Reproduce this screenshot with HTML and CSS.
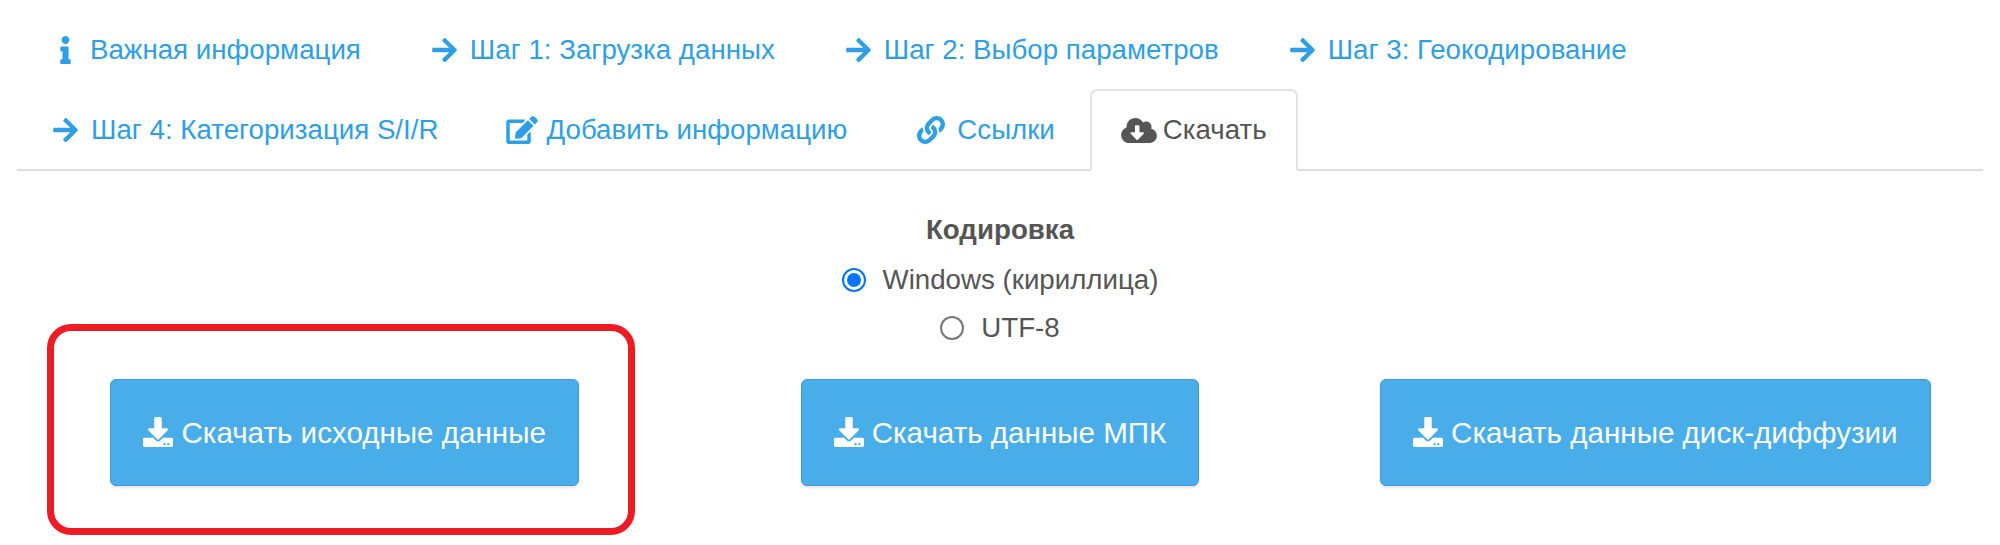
FILE: index.html
```html
<!DOCTYPE html>
<html lang="ru">
<head>
<meta charset="utf-8">
<title>Скачать</title>
<link rel="stylesheet" href="styles.css">
</head>
<body>
<svg class="defs" width="0" height="0" aria-hidden="true">
  <symbol id="i-arrow" viewBox="0 37 448 436"><path fill="currentColor" d="M190.5 66.9l22.2-22.2c9.4-9.4 24.6-9.4 33.9 0L441 239c9.4 9.4 9.4 24.6 0 33.9L246.6 467.3c-9.4 9.4-24.6 9.4-33.9 0l-22.2-22.2c-9.5-9.5-9.3-25 .4-34.3L311.4 296H24c-13.3 0-24-10.7-24-24v-32c0-13.3 10.7-24 24-24h287.4L190.9 101.2c-9.8-9.3-10-24.8-.4-34.3z"/></symbol>
  <symbol id="i-download" viewBox="0 0 512 512"><path fill="#fff" d="M216 0h80c13.3 0 24 10.7 24 24v168h87.7c17.8 0 26.7 21.5 14.1 34.1L269.7 378.3c-7.5 7.5-19.8 7.5-27.3 0L90.1 226.1c-12.6-12.6-3.7-34.1 14.1-34.1H192V24c0-13.3 10.7-24 24-24zm296 376v112c0 13.3-10.7 24-24 24H24c-13.3 0-24-10.7-24-24V376c0-13.3 10.7-24 24-24h146.7l49 49c20.1 20.1 52.5 20.1 72.6 0l49-49H488c13.3 0 24 10.7 24 24zm-124 88c0-11-9-20-20-20s-20 9-20 20 9 20 20 20 20-9 20-20zm64 0c0-11-9-20-20-20s-20 9-20 20 9 20 20 20 20-9 20-20z"/></symbol>
</svg>
<ul class="tabs">
  <li><a class="tab" href="#"><svg class="ic ic-info" viewBox="0 0 192 512"><path fill="currentColor" d="M20 424.229h20V279.771H20c-11.046 0-20-8.954-20-20V212c0-11.046 8.954-20 20-20h112c11.046 0 20 8.954 20 20v212.229h20c11.046 0 20 8.954 20 20V492c0 11.046-8.954 20-20 20H20c-11.046 0-20-8.954-20-20v-47.771c0-11.046 8.954-20 20-20zM96 0C56.235 0 24 32.235 24 72s32.235 72 72 72 72-32.235 72-72S135.764 0 96 0z"/></svg>Важная информация</a></li>
  <li><a class="tab" href="#"><svg class="ic ic-arrow"><use href="#i-arrow"/></svg>Шаг 1: Загрузка данных</a></li>
  <li><a class="tab" href="#"><svg class="ic ic-arrow"><use href="#i-arrow"/></svg>Шаг 2: Выбор параметров</a></li>
  <li><a class="tab" href="#"><svg class="ic ic-arrow"><use href="#i-arrow"/></svg>Шаг 3: Геокодирование</a></li>
  <li><a class="tab" href="#"><svg class="ic ic-arrow"><use href="#i-arrow"/></svg>Шаг 4: Категоризация S/I/R</a></li>
  <li><a class="tab" href="#"><svg class="ic ic-edit" viewBox="0 0 576 512"><path fill="currentColor" d="M402.6 83.2l90.2 90.2c3.8 3.8 3.8 10 0 13.8L274.4 405.6l-92.8 10.3c-12.4 1.4-22.9-9.1-21.5-21.5l10.3-92.8L388.8 83.2c3.8-3.8 10-3.8 13.8 0zm162-22.9l-48.8-48.8c-15.2-15.2-39.9-15.2-55.2 0l-35.4 35.4c-3.8 3.8-3.8 10 0 13.8l90.2 90.2c3.8 3.8 10 3.8 13.8 0l35.4-35.4c15.2-15.3 15.2-40 0-55.2zM384 346.2V448H64V128h229.8c3.2 0 6.2-1.3 8.5-3.5l40-40c7.6-7.6 2.2-20.5-8.5-20.5H48C21.5 64 0 85.5 0 112v352c0 26.5 21.5 48 48 48h352c26.5 0 48-21.5 48-48V306.2c0-10.7-12.9-16-20.5-8.5l-40 40c-2.2 2.3-3.5 5.3-3.5 8.5z"/></svg>Добавить информацию</a></li>
  <li><a class="tab" href="#"><svg class="ic ic-link" viewBox="0 0 512 512"><path fill="currentColor" d="M326.612 185.391c59.747 59.809 58.927 155.698.36 214.59-.11.12-.24.25-.36.37l-67.2 67.2c-59.27 59.27-155.699 59.262-214.96 0-59.27-59.26-59.27-155.7 0-214.96l37.106-37.106c9.84-9.84 26.786-3.3 27.294 10.606.648 17.722 3.826 35.527 9.69 52.721 1.986 5.822.567 12.262-3.783 16.612l-13.087 13.087c-28.026 28.026-28.905 73.66-1.155 101.96 28.024 28.579 74.086 28.749 102.325.51l67.2-67.19c28.191-28.191 28.073-73.757 0-101.83-3.701-3.694-7.429-6.564-10.341-8.569a16.037 16.037 0 0 1-6.947-12.606c-.396-10.567 3.348-21.456 11.698-29.806l21.054-21.055c5.521-5.521 14.182-6.199 20.584-1.731a152.482 152.482 0 0 1 20.522 17.197zM467.547 44.449c-59.261-59.262-155.69-59.27-214.96 0l-67.2 67.2c-.12.12-.25.25-.36.37-58.566 58.892-59.387 154.781.36 214.59a152.454 152.454 0 0 0 20.521 17.196c6.402 4.468 15.064 3.789 20.584-1.731l21.054-21.055c8.35-8.35 12.094-19.239 11.698-29.806a16.037 16.037 0 0 0-6.947-12.606c-2.912-2.005-6.64-4.875-10.341-8.569-28.073-28.073-28.191-73.639 0-101.83l67.2-67.19c28.239-28.239 74.3-28.069 102.325.51 27.75 28.3 26.872 73.934-1.155 101.96l-13.087 13.087c-4.35 4.35-5.769 10.79-3.783 16.612 5.864 17.194 9.042 34.999 9.69 52.721.509 13.906 17.454 20.446 27.294 10.606l37.106-37.106c59.271-59.259 59.271-155.699.001-214.959z"/></svg>Ссылки</a></li>
  <li><a class="tab active" href="#"><svg class="ic ic-cloud" viewBox="0 32 640 448"><path fill="currentColor" d="M537.6 226.6c4.1-10.7 6.4-22.4 6.4-34.6 0-53-43-96-96-96-19.7 0-38.1 6-53.3 16.2C367 64.2 315.3 32 256 32c-88.4 0-160 71.6-160 160 0 2.7.1 5.4.2 8.1C40.2 219.8 0 273.2 0 336c0 79.5 64.5 144 144 144h368c70.7 0 128-57.3 128-128 0-61.9-44-113.6-102.4-125.4zm-132.9 88.7L299.3 420.7c-6.2 6.2-16.4 6.2-22.6 0L171.3 315.3c-10.1-10.1-2.9-27.3 11.3-27.3H248V176c0-8.8 7.2-16 16-16h48c8.8 0 16 7.2 16 16v112h65.4c14.2 0 21.4 17.2 11.3 27.3z"/></svg>Скачать</a></li>
</ul>
<section class="encoding">
  <h2 class="encoding-title">Кодировка</h2>
  <label class="radio"><input type="radio" name="enc" checked>Windows (кириллица)</label>
  <label class="radio"><input type="radio" name="enc">UTF-8</label>
</section>
<div class="actions">
  <div class="cell">
    <a class="btn" href="#"><svg class="ic-dl"><use href="#i-download"/></svg>Скачать исходные данные</a>
    <div class="callout"></div>
  </div>
  <div class="cell"><a class="btn" href="#"><svg class="ic-dl"><use href="#i-download"/></svg>Скачать данные МПК</a></div>
  <div class="cell"><a class="btn" href="#"><svg class="ic-dl"><use href="#i-download"/></svg>Скачать данные диск-диффузии</a></div>
</div>
</body>
</html>
```
FILE: styles.css
```css
* { box-sizing: border-box; }
html, body { margin: 0; height: 100%; overflow: hidden; background: #fff; }
body {
  padding: 9px 17px 0;
  font-family: "Liberation Sans", Arial, sans-serif;
  font-size: 27.7px;
  line-height: 38px;
  color: #555;
}
.defs { position: absolute; }
.tabs {
  display: flex;
  flex-wrap: wrap;
  list-style: none;
  margin: 0;
  padding: 0;
  border-bottom: 2px solid #ddd;
}
.tabs li { margin: 0 4px -2px 0; }
.tab {
  display: flex;
  align-items: center;
  padding: 20px 29px;
  border: 2px solid transparent;
  border-radius: 7px 7px 0 0;
  color: #2e9fe6;
  text-decoration: none;
  white-space: nowrap;
}
.tab.active {
  color: #555;
  background: #fff;
  border-color: #e2e2e2 #e2e2e2 #fff;
}
.ic { flex: none; }
.ic-arrow { width: 25px; height: 24px; margin-left: 5px; margin-right: 13px; }
.ic-info { width: 11px; height: 28px; margin-left: 12px; margin-right: 19px; }
.ic-edit { width: 32px; height: 28px; margin-left: 2px; margin-right: 8px; }
.ic-link { width: 28px; height: 28px; margin-left: 4px; margin-right: 12px; }
.ic-cloud { width: 36px; height: 25px; margin-right: 6px; }
.encoding {
  display: flex;
  flex-direction: column;
  align-items: center;
  gap: 10px;
  padding-top: 40px;
}
.encoding-title { margin: 0 0 2px; font-size: 27.7px; font-weight: 700; line-height: 38px; }
.radio { display: flex; align-items: center; }
.radio input {
  appearance: none;
  flex: none;
  width: 24px;
  height: 24px;
  margin: 0 17px 0 0;
  padding: 3px;
  border: 2px solid #767676;
  border-radius: 50%;
  background: #fff content-box;
}
.radio input:checked {
  border-color: #0075ff;
  background: #0075ff content-box;
}
.actions {
  display: grid;
  grid-template-columns: repeat(3, 1fr);
  justify-items: center;
  margin-top: 32px;
}
.cell { position: relative; width: 100%; display: flex; justify-content: center; }
.btn {
  display: flex;
  align-items: center;
  height: 107px;
  padding: 0 32px;
  background: #48ade8;
  border: 1px solid #3f9bd6;
  border-radius: 6px;
  box-shadow: 0 2px 3px rgba(0, 0, 0, .1);
  color: #fff;
  font-size: 29.6px;
  text-decoration: none;
  white-space: nowrap;
}
.ic-dl { flex: none; width: 30px; height: 30px; margin-right: 8px; margin-top: -1px; }
.callout {
  position: absolute;
  left: 30px;
  top: -55px;
  width: 588px;
  height: 211px;
  border: 7px solid #ed1c24;
  border-radius: 24px;
  pointer-events: none;
}
```
